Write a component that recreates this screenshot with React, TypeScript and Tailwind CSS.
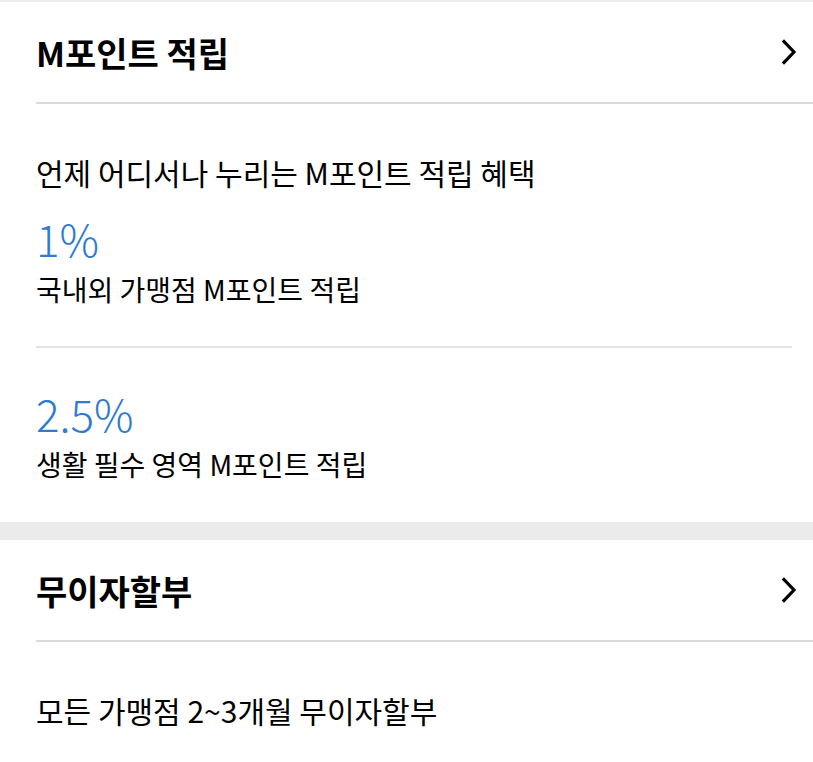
import React from 'react';

const FONT = { fontFamily: '"Noto Sans CJK KR", "Noto Sans", sans-serif' };

const Chevron: React.FC = () => (
    <svg className="h-[26px] w-[16px] text-black" viewBox="0 0 16 26" fill="none" stroke="currentColor">
        <path d="M3 2.5l10 10.5L3 23.5" strokeWidth="3.2" strokeLinecap="square" strokeLinejoin="miter" />
    </svg>
);

const SectionHeader: React.FC<{ title: string }> = ({ title }) => (
    <div className="pl-9">
        <div className="flex h-[102px] items-center justify-between pr-4 border-b-2 border-[#d9d9d9]">
            <h2 className="text-[34px] font-bold text-black">{title}</h2>
            <Chevron />
        </div>
    </div>
);

const Benefit: React.FC<{ rate: string; label: string }> = ({ rate, label }) => (
    <div>
        <div className="text-[44px] leading-[52px] font-light text-[#2f7bd0]">{rate}</div>
        <div className="text-[28px] leading-[50px] text-black">{label}</div>
    </div>
);

export default function App() {
    return (
        <div className="min-h-[762px] w-[813px] bg-white" style={FONT}>
            <div className="h-[2px] bg-[#ececec]" />
            <SectionHeader title="M포인트 적립" />
            <div className="pl-9 pr-[21px]">
                <p className="pt-[48px] text-[30px] leading-[40px] text-black">언제 어디서나 누리는 M포인트 적립 혜택</p>
                <div className="pt-[20px] pb-[32px] border-b-2 border-[#e5e5e5]">
                    <Benefit rate="1%" label="국내외 가맹점 M포인트 적립" />
                </div>
                <div className="pt-[39px] pb-[33px]">
                    <Benefit rate="2.5%" label="생활 필수 영역 M포인트 적립" />
                </div>
            </div>
            <div className="h-[18px] bg-[#ebebeb]" />
            <SectionHeader title="무이자할부" />
            <p className="pl-9 pt-[48px] text-[30px] leading-[40px] text-black">모든 가맹점 2~3개월 무이자할부</p>
        </div>
    );
}
